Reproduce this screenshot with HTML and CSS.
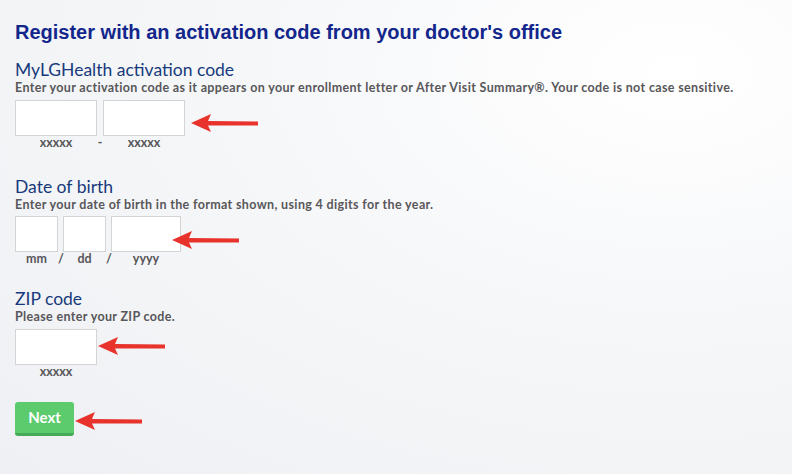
FILE: index.html
```html
<!DOCTYPE html>
<html lang="en">
<head>
  <meta charset="UTF-8" />
  <title>Register with an activation code</title>
  <link rel="stylesheet" href="styles.css">
</head>
<body>
  <h1>Register with an activation code from your doctor's office</h1>

  <div class="field">
    <h2>MyLGHealth activation code</h2>
    <p class="hint">Enter your activation code as it appears on your enrollment letter or After Visit Summary®. Your code is not case sensitive.</p>
    <div class="row">
      <div class="part"><input type="text" class="box wide" /><span class="fmt">xxxxx</span></div>
      <span class="sep">-</span>
      <div class="part"><input type="text" class="box wide" /><span class="fmt">xxxxx</span></div>
      <svg class="arrow arrow-code" width="68" height="20" viewBox="0 0 68 20"><path d="M0 10 L20 1 L17 8 L67 8.5 L67 12.5 L17 12.5 L20 19 Z" fill="#e8332c"/></svg>
    </div>
  </div>

  <div class="field">
    <h2>Date of birth</h2>
    <p class="hint">Enter your date of birth in the format shown, using 4 digits for the year.</p>
    <div class="row row-date">
      <div class="part"><input type="text" class="box small" /><span class="fmt">mm</span></div>
      <span class="sep">/</span>
      <div class="part"><input type="text" class="box small" /><span class="fmt">dd</span></div>
      <span class="sep">/</span>
      <div class="part"><input type="text" class="box year" /><span class="fmt">yyyy</span></div>
      <svg class="arrow arrow-dob" width="68" height="20" viewBox="0 0 68 20"><path d="M0 10 L20 1 L17 8 L67 8.5 L67 12.5 L17 12.5 L20 19 Z" fill="#e8332c"/></svg>
    </div>
  </div>

  <div class="field field-zip">
    <h2>ZIP code</h2>
    <p class="hint">Please enter your ZIP code.</p>
    <div class="row">
      <div class="part"><input type="text" class="box wide" /><span class="fmt">xxxxx</span></div>
      <svg class="arrow arrow-zip" width="68" height="20" viewBox="0 0 68 20"><path d="M0 10 L20 1 L17 8 L67 8.5 L67 12.5 L17 12.5 L20 19 Z" fill="#e8332c"/></svg>
    </div>
  </div>

  <div class="actions">
    <button class="next">Next</button>
    <svg class="arrow arrow-next" width="68" height="20" viewBox="0 0 68 20"><path d="M0 10 L20 1 L17 8 L67 8.5 L67 12.5 L17 12.5 L20 19 Z" fill="#e8332c"/></svg>
  </div>
</body>
</html>
```

FILE: styles.css
```css
html { height: 100%; }
body {
  margin: 0;
  padding: 0 15px;
  min-height: 100%;
  font-family: Lato, "Open Sans", sans-serif;
  color: #58575a;
  background: radial-gradient(ellipse at 85% 15%, #ffffff 0%, #f6f7f9 45%, #eff0f3 100%);
}
h1 {
  margin: 20px 0 0;
  font-family: "Liberation Sans", Arial, sans-serif;
  font-size: 20px;
  line-height: 24px;
  font-weight: bold;
  color: #13268c;
}
.field { margin-top: 16px; }
.field + .field { margin-top: 27px; }
.field-zip.field { margin-top: 23px; }
h2 {
  margin: 0;
  font-size: 17.5px;
  line-height: 20px;
  font-weight: normal;
  color: #173a7c;
}
.hint {
  margin: 0;
  font-size: 12.5px;
  line-height: 15px;
  letter-spacing: 0.35px;
  font-weight: bold;
}
.row {
  position: relative;
  display: flex;
  align-items: flex-start;
  margin-top: 4.5px;
}
.part {
  display: flex;
  flex-direction: column;
  align-items: center;
}
.box {
  box-sizing: border-box;
  height: 36px;
  margin: 0;
  padding: 4px;
  border: 1px solid #d4d4d4;
  background: #fff;
}
.wide { width: 82px; }
.small { width: 43px; }
.year { width: 70px; }
.fmt, .sep {
  font-size: 12.5px;
  line-height: 14px;
  font-weight: bold;
}
.sep {
  width: 6px;
  padding-top: 36px;
  text-align: center;
}
.row-date .sep { width: 5px; }
.arrow { position: absolute; }
.arrow-code { left: 176px; top: 13px; }
.arrow-dob { left: 157px; top: 14px; }
.arrow-zip { left: 83px; top: 7px; }
.actions {
  position: relative;
  margin-top: 23px;
}
.next {
  width: 59px;
  height: 34px;
  padding: 0;
  border: none;
  border-bottom: 3px solid #46a956;
  border-radius: 3px;
  background: #5ccb6d;
  color: #fff;
  font-family: Lato, "Open Sans", sans-serif;
  font-size: 15px;
  font-weight: bold;
}
.arrow-next { left: 60px; top: 9px; }
```
